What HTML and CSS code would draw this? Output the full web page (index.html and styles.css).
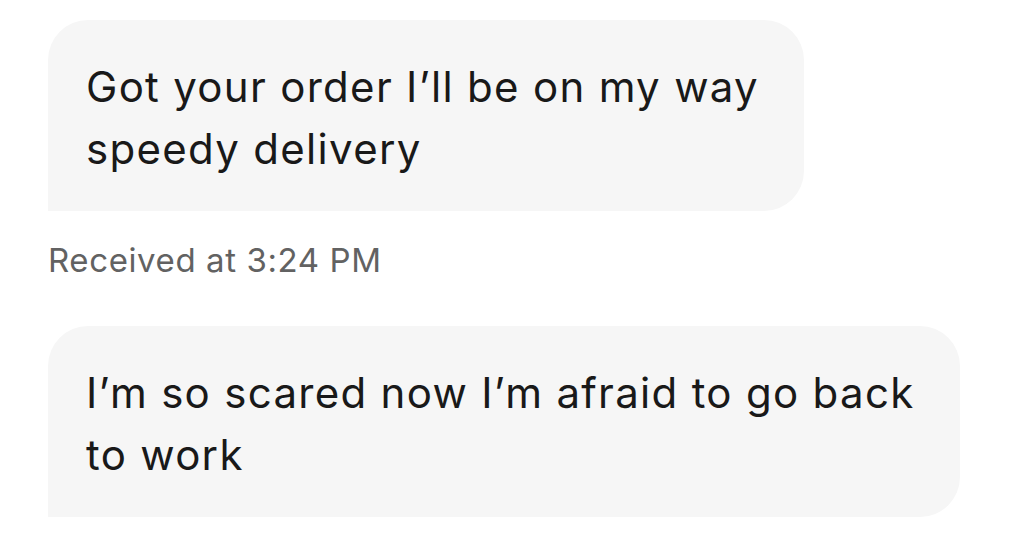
FILE: index.html
```html
<!DOCTYPE html>
<html lang="en">
<head>
  <meta charset="UTF-8">
  <meta name="viewport" content="width=device-width, initial-scale=1.0">
  <title>chat</title>
  <link rel="stylesheet" href="styles.css">
</head>
<body>
  <div class="thread">
    <div class="bubble">Got your order I’ll be on my way<br>speedy delivery</div>
    <p class="meta">Received at 3:24 PM</p>
    <div class="bubble">I’m so scared now I’m afraid to go back<br>to work</div>
  </div>
</body>
</html>
```

FILE: styles.css
```css
body { margin: 0; background: #fff; font-family: Inter, "Noto Sans", sans-serif; color: #191919; }
.thread { display: flex; flex-direction: column; align-items: flex-start; padding: 20px 0 0 48px; }
.bubble { box-sizing: border-box; height: 191px; padding: 36px 45px 0 38px; background: #f6f6f6; border-radius: 40px 40px 40px 0; font-size: 42px; line-height: 62px; letter-spacing: 1.3px; white-space: nowrap; }
.meta { box-sizing: border-box; height: 115px; margin: 0; padding: 29px 0 0; font-size: 33px; line-height: 40px; letter-spacing: 0.6px; color: #626262; }
```
